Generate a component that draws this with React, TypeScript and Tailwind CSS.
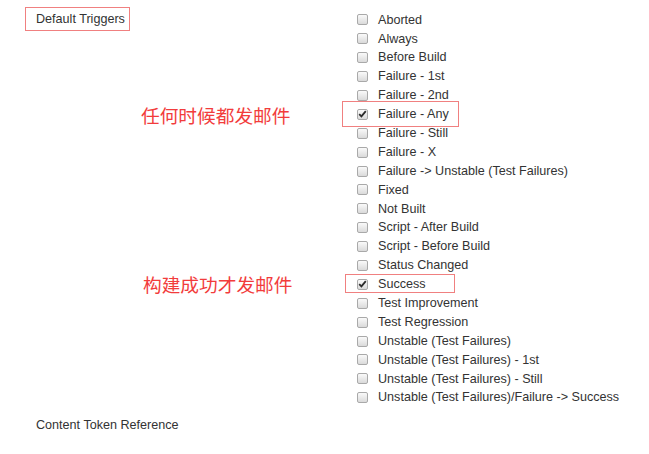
import React from 'react';

interface Trigger {
  label: string;
  checked?: boolean;
  note?: string;
  box?: 'tall' | 'short';
}

const triggers: Trigger[] = [
  { label: 'Aborted' },
  { label: 'Always' },
  { label: 'Before Build' },
  { label: 'Failure - 1st' },
  { label: 'Failure - 2nd' },
  { label: 'Failure - Any', checked: true, note: '任何时候都发邮件', box: 'tall' },
  { label: 'Failure - Still' },
  { label: 'Failure - X' },
  { label: 'Failure -> Unstable (Test Failures)' },
  { label: 'Fixed' },
  { label: 'Not Built' },
  { label: 'Script - After Build' },
  { label: 'Script - Before Build' },
  { label: 'Status Changed' },
  { label: 'Success', checked: true, note: '构建成功才发邮件', box: 'short' },
  { label: 'Test Improvement' },
  { label: 'Test Regression' },
  { label: 'Unstable (Test Failures)' },
  { label: 'Unstable (Test Failures) - 1st' },
  { label: 'Unstable (Test Failures) - Still' },
  { label: 'Unstable (Test Failures)/Failure -> Success' },
];

const Checkbox: React.FC<{ checked?: boolean }> = ({ checked }) => (
  <span className="flex h-[11px] w-[11px] shrink-0 items-center justify-center rounded-[2px] border border-[#a9a9a9] bg-gradient-to-b from-[#fafafa] to-[#dadada]">
    {checked && (
      <svg width="9" height="8" viewBox="0 0 9 8">
        <path d="M1.2 4.2 L3.4 6.4 L7.8 1.2" fill="none" stroke="#2b2b2b" strokeWidth="1.8" />
      </svg>
    )}
  </span>
);

export default function App() {
  return (
    <div className="h-[454px] w-[649px] bg-white pt-[10.5px] font-['Liberation_Sans',Arial,sans-serif] text-[12.6px] text-[#333]">
      {triggers.map((t, i) => (
        <div key={t.label} className="flex h-[18.9px] items-center">
          <div className="flex w-[357px] shrink-0 items-center">
            {i === 0 && (
              <div className="ml-[25px] mt-[-1px] flex h-[24px] w-[105px] items-center border border-[#f08080] pl-[10px]">
                Default Triggers
              </div>
            )}
            {t.note && (
              <span
                className={
                  "leading-none text-[18.7px] text-[#f23c3c] font-['Noto_Sans_CJK_SC',sans-serif] " +
                  (t.box === 'tall' ? 'ml-[141px] mt-[2px]' : 'ml-[143px]')
                }
              >
                {t.note}
              </span>
            )}
          </div>
          <div className="relative flex h-[13px] items-center gap-[10px]">
            {t.box === 'tall' && (
              <span className="absolute left-[-15px] top-[-6.5px] h-[26px] w-[117px] border border-[#f08080]" />
            )}
            {t.box === 'short' && (
              <span className="absolute left-[-12px] top-[-3.5px] h-[19px] w-[110px] border border-[#f08080]" />
            )}
            <Checkbox checked={t.checked} />
            <span className="leading-none">{t.label}</span>
          </div>
        </div>
      ))}
      <div className="ml-[36px] mt-[11px] leading-[15px]">Content Token Reference</div>
    </div>
  );
}
